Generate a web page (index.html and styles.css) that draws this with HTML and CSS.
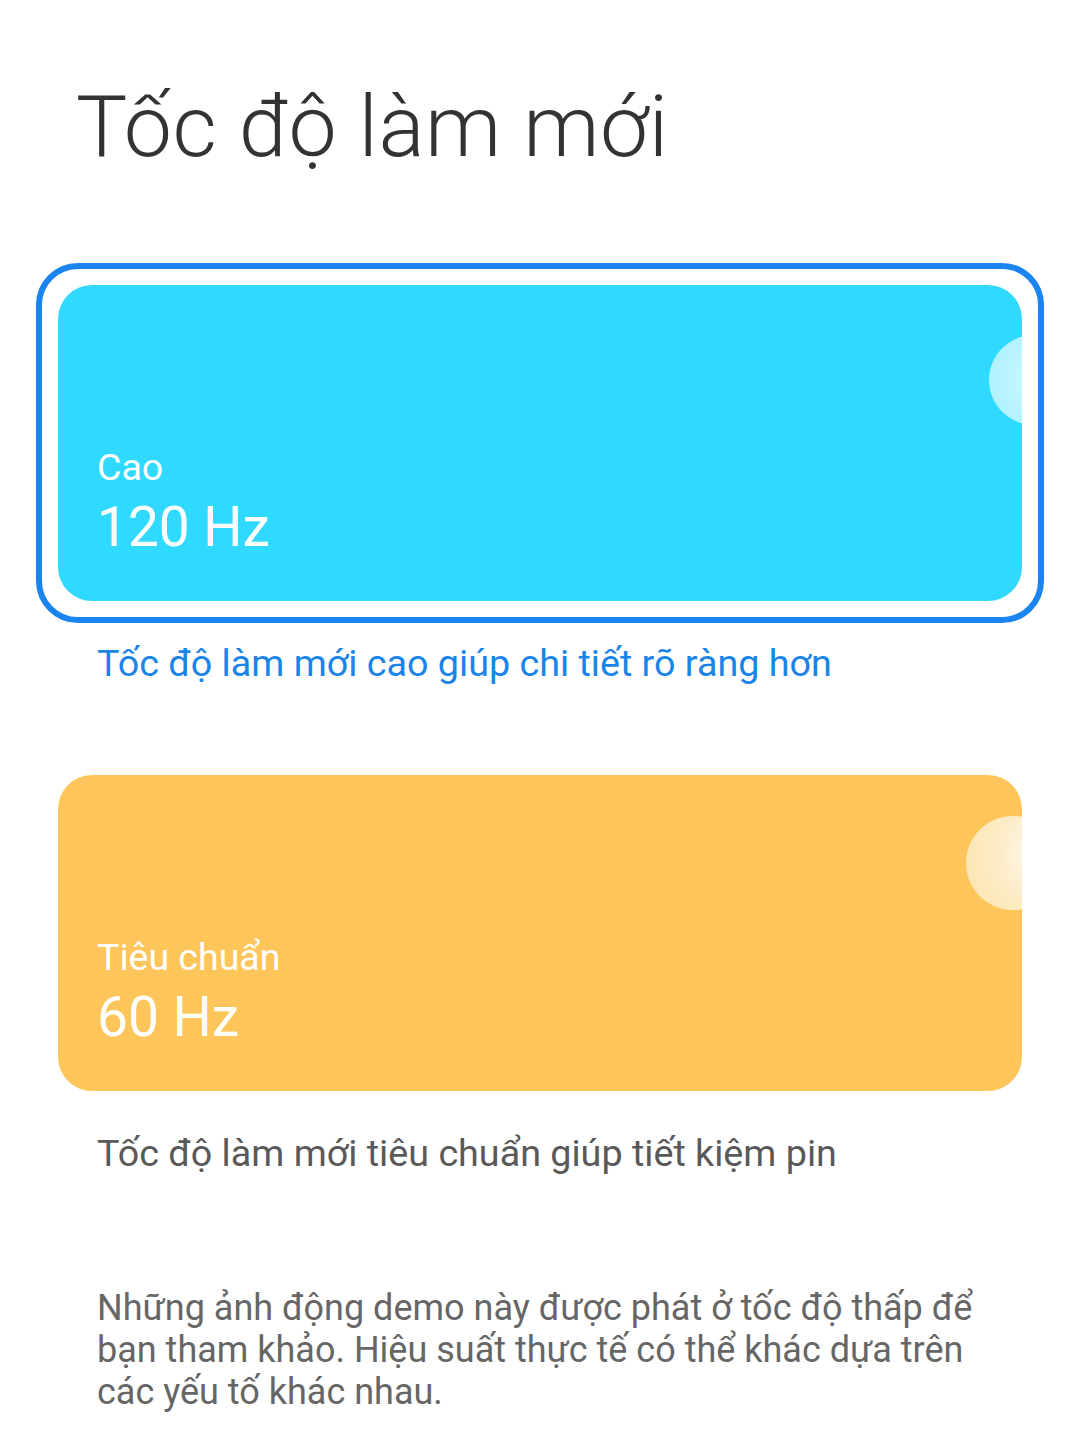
FILE: index.html
```html
<!DOCTYPE html>
<html lang="vi">
<head>
<meta charset="utf-8">
<link rel="stylesheet" href="styles.css">
</head>
<body>
<main class="page">
  <h1 class="title">Tốc độ làm mới</h1>

  <section class="option">
    <div class="frame frame-selected">
      <div class="card card-high">
        <span class="bubble bubble-high"></span>
        <div class="card-label">Cao</div>
        <div class="card-value">120 Hz</div>
      </div>
    </div>
    <p class="desc desc-active">Tốc độ làm mới cao giúp chi tiết rõ ràng hơn</p>
  </section>

  <section class="option option-second">
    <div class="frame">
      <div class="card card-std">
        <span class="bubble bubble-std"></span>
        <div class="card-label">Tiêu chuẩn</div>
        <div class="card-value">60 Hz</div>
      </div>
    </div>
    <p class="desc">Tốc độ làm mới tiêu chuẩn giúp tiết kiệm pin</p>
  </section>

  <p class="note">Những ảnh động demo này được phát ở tốc độ thấp để bạn tham khảo. Hiệu suất thực tế có thể khác dựa trên các yếu tố khác nhau.</p>
</main>
</body>
</html>
```

FILE: styles.css
```css
html, body {
  margin: 0;
  padding: 0;
  background: #ffffff;
}

.page {
  font-family: Roboto, "Noto Sans", "Liberation Sans", sans-serif;
  padding: 0 36px 0 36px;
  display: flex;
  flex-direction: column;
}

.title {
  margin: 72px 0 0 40px;
  font-weight: 300;
  font-size: 86px;
  line-height: 110px;
  color: #333333;
  letter-spacing: 0.5px;
}

.option {
  margin-top: 81px;
  display: flex;
  flex-direction: column;
}

.option-second {
  margin-top: 66px;
}

.frame {
  border: 6px solid transparent;
  border-radius: 42px;
  padding: 16px;
}

.frame-selected {
  border-color: #1a84f0;
}

.card {
  position: relative;
  overflow: hidden;
  height: 316px;
  border-radius: 34px;
  display: flex;
  flex-direction: column;
  justify-content: flex-end;
  padding: 0 39px 42px;
  box-sizing: border-box;
  color: #ffffff;
}

.card-high {
  background: #30d9ff;
}

.card-std {
  background: #fec65a;
}

.bubble {
  position: absolute;
  border-radius: 50%;
}

.bubble-high {
  width: 90px;
  height: 90px;
  right: -57px;
  top: 50px;
  background: radial-gradient(circle at 70% 50%, #d8fbff 0%, #b8f4ff 60%, #a6f0ff 100%);
}

.bubble-std {
  width: 94px;
  height: 94px;
  right: -38px;
  top: 41px;
  background: radial-gradient(circle at 85% 40%, #fffdf6 0%, #fdedcc 45%, #fbe3a8 100%);
}

.card-label {
  font-size: 37.5px;
  line-height: 44px;
  font-weight: 400;
}

.card-value {
  font-size: 55px;
  line-height: 64px;
  margin-top: 6px;
  font-weight: 400;
}

.desc {
  margin: 16px 0 0 61px;
  font-size: 37.7px;
  line-height: 48px;
  color: #595959;
}

.desc-active {
  color: #1a84e8;
}

.note {
  margin: 110px 0 0 61px;
  font-size: 36px;
  line-height: 42px;
  color: #666666;
  max-width: 910px;
}
```
